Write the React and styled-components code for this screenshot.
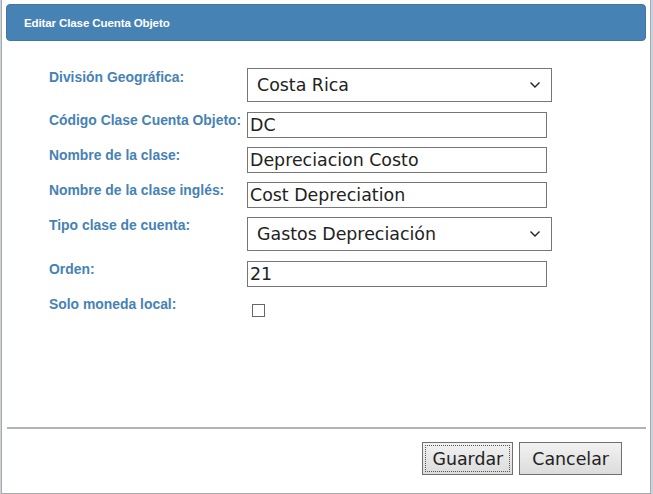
import React, { useState } from "react";
import styled, { createGlobalStyle } from "styled-components";

const GlobalStyle = createGlobalStyle`
  html, body {
    margin: 0;
    padding: 0;
    background: #c9d3dd;
  }
  body {
    width: 653px;
    height: 494px;
    overflow: hidden;
  }
`;

const Dialog = styled.div`
  box-sizing: border-box;
  width: 650px;
  height: 494px;
  margin-left: 1px;
  background: #fff;
  border: 1px solid #a9a9a9;
  border-top: none;
  padding: 4px 4px 0 4px;
  display: flex;
  flex-direction: column;
`;

const TitleBar = styled.div`
  height: 35px;
  background: #4682b4;
  border: 1px solid #3f76a3;
  border-radius: 4px;
  display: flex;
  align-items: center;
  padding-left: 17px;
  color: #fff;
  font-family: "Liberation Sans", Arial, sans-serif;
  font-weight: bold;
  font-size: 11.6px;
  letter-spacing: -0.15px;
`;

const Form = styled.div`
  flex: 1;
  display: grid;
  grid-template-columns: 198px 305px;
  row-gap: 9px;
  align-items: start;
  align-content: start;
  padding: 27px 0 0 43px;
`;

const Label = styled.label`
  font-family: "Liberation Sans", Arial, sans-serif;
  font-weight: bold;
  font-size: 13.9px;
  color: #4682b4;
  line-height: 16px;
  padding-top: ${(p) => p.$offset || 0}px;
  white-space: nowrap;
`;

const Select = styled.div`
  box-sizing: border-box;
  height: 34px;
  width: 305px;
  margin-bottom: 1px;
  border: 1px solid #767676;
  display: flex;
  align-items: center;
  justify-content: space-between;
  padding: 0 10px 0 9px;
  font-family: "DejaVu Sans", sans-serif;
  font-size: 17.4px;
  color: #222;
`;

const TextInput = styled.input`
  box-sizing: border-box;
  height: 26px;
  width: 300px;
  border: 1px solid #767676;
  padding: 0 2px;
  font-family: "DejaVu Sans", sans-serif;
  font-size: 17.4px;
  color: #222;
  outline: none;
`;

const Check = styled.input`
  appearance: none;
  box-sizing: border-box;
  width: 13px;
  height: 13px;
  margin: 8px 0 0 5px;
  border: 1px solid #666;
  background: #fff;
`;

const Footer = styled.div`
  box-sizing: border-box;
  border-top: 2px solid #b3b3b3;
  height: 66px;
  margin: 0 0 0 1px;
  display: flex;
  justify-content: flex-end;
  align-items: flex-start;
  gap: 6px;
  padding: 13px 24px 0 0;
`;

const Button = styled.button`
  box-sizing: border-box;
  height: 33px;
  padding: 0 ${(p) => (p.$focus ? 9 : 12)}px;
  border: 1px solid #707070;
  background: linear-gradient(#f2f2f2, #dcdcdc);
  font-family: "DejaVu Sans", sans-serif;
  font-size: 17.4px;
  color: #222;
  outline: ${(p) => (p.$focus ? "1px dotted #555" : "none")};
  outline-offset: -4px;
`;

const Chevron = () => (
  <svg width="12" height="8" viewBox="0 0 12 8">
    <path d="M1.5 1.5 L6 6 L10.5 1.5" fill="none" stroke="#222" strokeWidth="1.4" />
  </svg>
);

export default function App() {
  const [codigo, setCodigo] = useState("DC");
  const [nombre, setNombre] = useState("Depreciacion Costo");
  const [ingles, setIngles] = useState("Cost Depreciation");
  const [orden, setOrden] = useState("21");

  return (
    <>
      <GlobalStyle />
      <Dialog>
        <TitleBar>Editar Clase Cuenta Objeto</TitleBar>
        <Form>
          <Label $offset={1}>División Geográfica:</Label>
          <Select>
            <span>Costa Rica</span>
            <Chevron />
          </Select>

          <Label>Código Clase Cuenta Objeto:</Label>
          <TextInput value={codigo} onChange={(e) => setCodigo(e.target.value)} />

          <Label>Nombre de la clase:</Label>
          <TextInput value={nombre} onChange={(e) => setNombre(e.target.value)} />

          <Label>Nombre de la clase inglés:</Label>
          <TextInput value={ingles} onChange={(e) => setIngles(e.target.value)} />

          <Label>Tipo clase de cuenta:</Label>
          <Select>
            <span>Gastos Depreciación</span>
            <Chevron />
          </Select>

          <Label>Orden:</Label>
          <TextInput value={orden} onChange={(e) => setOrden(e.target.value)} />

          <Label>Solo moneda local:</Label>
          <Check type="checkbox" />
        </Form>
        <Footer>
          <Button $focus>Guardar</Button>
          <Button>Cancelar</Button>
        </Footer>
      </Dialog>
    </>
  );
}
